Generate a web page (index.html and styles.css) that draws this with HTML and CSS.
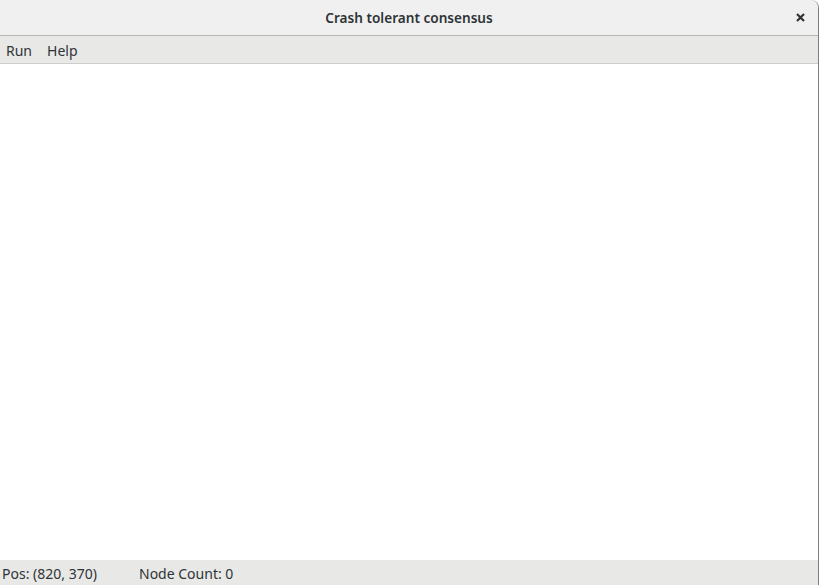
FILE: index.html
```html
<!DOCTYPE html>
<html>
<head>
<meta charset="utf-8">
<link rel="stylesheet" href="styles.css">
</head>
<body>
<div class="window">
  <header class="titlebar">
    <span class="title">Crash tolerant consensus</span>
    <span class="close">
      <svg width="9" height="9" viewBox="0 0 9 9"><path d="M1 1 L8 8 M8 1 L1 8" stroke="#2e3436" stroke-width="2.2" stroke-linecap="butt"/></svg>
    </span>
  </header>
  <nav class="menubar">
    <span class="menu-item">Run</span>
    <span class="menu-item">Help</span>
  </nav>
  <main class="canvas"></main>
  <footer class="statusbar">
    <span class="status-pos">Pos: (820, 370)</span>
    <span class="status-count">Node Count: 0</span>
  </footer>
</div>
</body>
</html>
```
FILE: styles.css
```css
html, body {
  margin: 0;
  padding: 0;
  background: #ffffff;
}
.window {
  width: 818px;
  height: 585px;
  border-right: 1px solid #7f7f7f;
  border-top-right-radius: 8px;
  display: flex;
  flex-direction: column;
  overflow: hidden;
  font-family: "Noto Sans", "Open Sans", sans-serif;
}
.titlebar {
  height: 35px;
  flex: none;
  background: #f0f0f0;
  border-bottom: 1px solid #b6b6b3;
  display: flex;
  align-items: center;
  justify-content: center;
  position: relative;
  border-top-right-radius: 8px;
}
.title {
  font-size: 13.6px;
  font-weight: 600;
  color: #2e3436;
}
.close {
  position: absolute;
  right: 13px;
  top: 13px;
  width: 9px;
  height: 9px;
  display: flex;
}
.menubar {
  flex: none;
  background: #e8e8e7;
  border-bottom: 1px solid #cdcdcb;
  display: flex;
  align-items: center;
  padding-left: 6px;
  padding-top: 2px;
  box-sizing: border-box;
  height: 28px;
  gap: 15px;
  font-size: 14px;
  color: #2e3436;
}
.canvas {
  flex: 1;
  background: #ffffff;
}
.statusbar {
  height: 25px;
  flex: none;
  background: #e8e8e7;
  display: flex;
  align-items: center;
  padding-left: 2px;
  padding-top: 2px;
  box-sizing: border-box;
  font-size: 14px;
  color: #2e3436;
}
.status-pos {
  width: 137px;
}
```
